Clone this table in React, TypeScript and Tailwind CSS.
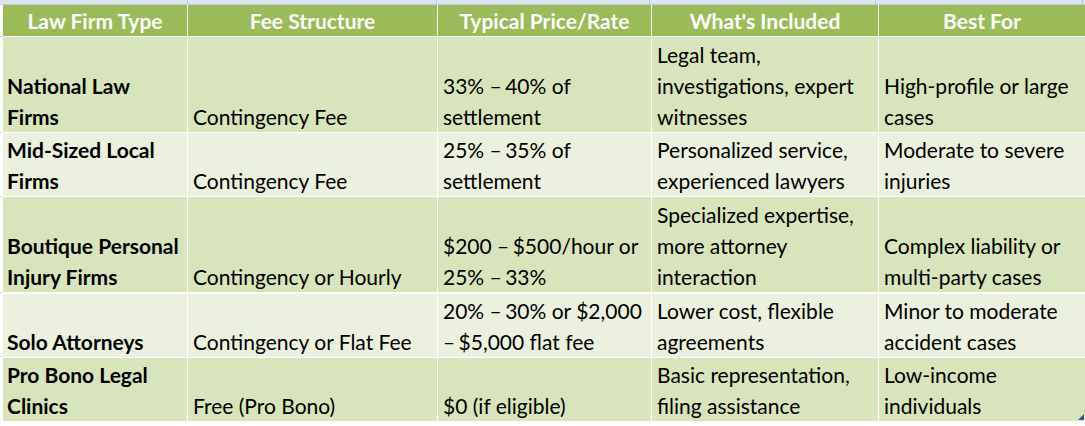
import React from 'react';

const headers = ['Law Firm Type', 'Fee Structure', 'Typical Price/Rate', "What's Included", 'Best For'];

// each cell is a list of lines, the way the sheet wraps them
const rows: string[][][] = [
  [
    ['National Law', 'Firms'],
    ['Contingency Fee'],
    ['33% – 40% of', 'settlement'],
    ['Legal team,', 'investigations, expert', 'witnesses'],
    ['High-profile or large', 'cases'],
  ],
  [
    ['Mid-Sized Local', 'Firms'],
    ['Contingency Fee'],
    ['25% – 35% of', 'settlement'],
    ['Personalized service,', 'experienced lawyers'],
    ['Moderate to severe', 'injuries'],
  ],
  [
    ['Boutique Personal', 'Injury Firms'],
    ['Contingency or Hourly'],
    ['$200 – $500/hour or', '25% – 33%'],
    ['Specialized expertise,', 'more attorney', 'interaction'],
    ['Complex liability or', 'multi-party cases'],
  ],
  [
    ['Solo Attorneys'],
    ['Contingency or Flat Fee'],
    ['20% – 30% or $2,000', '– $5,000 flat fee'],
    ['Lower cost, flexible', 'agreements'],
    ['Minor to moderate', 'accident cases'],
  ],
  [
    ['Pro Bono Legal', 'Clinics'],
    ['Free (Pro Bono)'],
    ['$0 (if eligible)'],
    ['Basic representation,', 'filing assistance'],
    ['Low-income', 'individuals'],
  ],
];

const rowHeights = ['h-[95px]', 'h-[63px]', 'h-[95px]', 'h-[63px]', 'h-[63px]'];

// the sheet sets the dashes tighter than Lato does
const Line = ({ text }: { text: string }) => {
  const parts = text.split('–');
  return (
    <span>
      {parts.map((p, i) => (
        <React.Fragment key={i}>
          {i > 0 && <span className="tracking-[-2px]">–</span>}
          {p}
        </React.Fragment>
      ))}
    </span>
  );
};

const App = () => {
  return (
    <div className="w-[1085px] h-[426px] bg-white overflow-hidden" style={{ fontFamily: 'Lato, "Open Sans", sans-serif' }}>
      {/* column header strip of the sheet */}
      <div className="h-[5px] bg-[#dfe5ef] border-b border-[#c5cfdf] flex">
        <div className="w-[188px] border-r border-[#b8c4d8]" />
        <div className="w-[249px] border-r border-[#b8c4d8]" />
        <div className="w-[213px] border-r border-[#b8c4d8]" />
        <div className="w-[226px] border-r border-[#b8c4d8]" />
        <div className="w-[207px] border-r border-[#b8c4d8]" />
      </div>

      <div className="flex">
        <div className="w-[4px] flex flex-col">
          <div className="h-[32px] border-b border-[#c9d3e3]" />
          <div className="h-[96px] border-b border-[#dde3ec]" />
          <div className="h-[64px] border-b border-[#dde3ec]" />
          <div className="h-[96px] border-b border-[#dde3ec]" />
          <div className="h-[64px] border-b border-[#dde3ec]" />
          <div className="h-[64px]" />
        </div>

        <div className="relative grid grid-cols-[184px_249px_213px_226px_206px] gap-px bg-white text-[21px] text-black">
          {headers.map((h) => (
            <div key={h} className="h-[31px] bg-[#9bbb59] text-white font-bold text-center leading-[31px] whitespace-nowrap">
              {h}
            </div>
          ))}

          {rows.map((row, ri) =>
            row.map((cell, ci) => (
              <div
                key={`${ri}-${ci}`}
                className={`${rowHeights[ri]} ${ri % 2 === 0 ? 'bg-[#d8e4bc]' : 'bg-[#ebf1de]'} flex flex-col justify-end px-[5px] leading-[31px] whitespace-nowrap ${ci === 0 ? 'font-bold pl-[4px]' : ''}`}
              >
                {cell.map((line, li) => (
                  <Line key={li} text={line} />
                ))}
              </div>
            ))
          )}

          {/* table resize handle */}
          <div className="absolute right-[1px] bottom-[1px] w-0 h-0 border-l-[6px] border-l-transparent border-b-[6px] border-b-[#3b4fa8]" />
        </div>
      </div>
    </div>
  );
};

export default App;
